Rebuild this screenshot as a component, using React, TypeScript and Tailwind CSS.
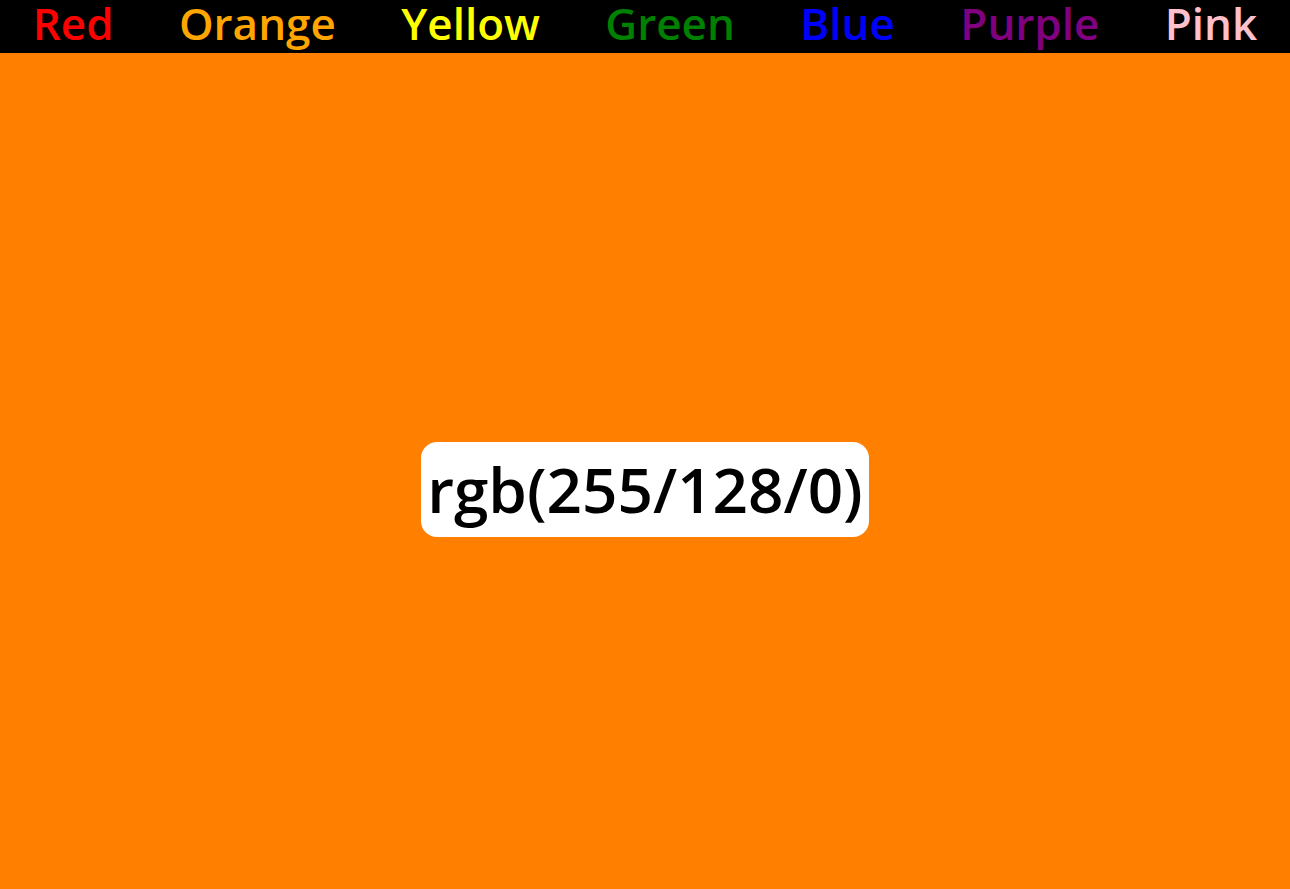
const colors = [
  { name: "Red", cls: "text-[#ff0000]" },
  { name: "Orange", cls: "text-[#ffa500]" },
  { name: "Yellow", cls: "text-[#ffff00]" },
  { name: "Green", cls: "text-[#008000]" },
  { name: "Blue", cls: "text-[#0000ff]" },
  { name: "Purple", cls: "text-[#800080]" },
  { name: "Pink", cls: "text-[#ffc0cb]" },
];

const App = () => {
  return (
    <div className="h-screen overflow-hidden bg-[#ff8000] font-['Open_Sans',sans-serif]">
      <nav className="flex h-[53px] items-center justify-around bg-black pb-[6px]">
        {colors.map((c) => (
          <span key={c.name} className={`${c.cls} text-[44px] font-semibold leading-[47px]`}>
            {c.name}
          </span>
        ))}
      </nav>
      <main className="flex h-[calc(100vh-53px)] items-center justify-center pt-[37px]">
        <div className="rounded-2xl bg-white px-[6px] py-[6px] text-[62px] font-semibold leading-[83px] text-black">
          rgb(255/128/0)
        </div>
      </main>
    </div>
  );
};

export default App;
